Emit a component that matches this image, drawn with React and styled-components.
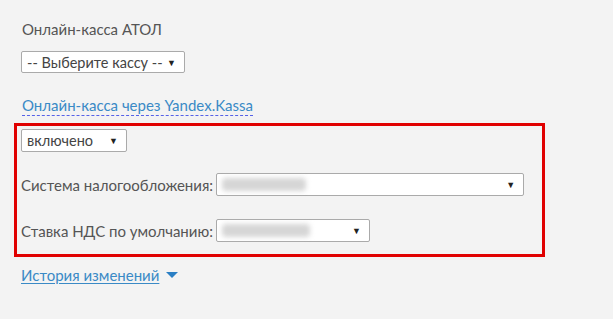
import React from "react";
import styled, { createGlobalStyle } from "styled-components";

const GlobalStyle = createGlobalStyle`
  body {
    margin: 0;
    background: #f3f3f3;
    font-family: "Lato", "Open Sans", sans-serif;
    color: #555;
  }
`;

const Page = styled.div`
  width: 613px;
  height: 319px;
  padding: 19px 0 0 0;
  box-sizing: border-box;
  display: flex;
  flex-direction: column;
`;

const Section = styled.div`
  padding-left: 21px;
  display: flex;
  flex-direction: column;
  align-items: flex-start;
`;

const Title = styled.div`
  font-size: 15px;
  line-height: 20px;
  padding-left: 1px;
`;

const Select = styled.div`
  display: flex;
  align-items: center;
  justify-content: space-between;
  box-sizing: border-box;
  width: ${(p) => p.$w}px;
  height: ${(p) => p.$h || 23}px;
  margin-top: ${(p) => p.$mt || 0}px;
  padding: 0 8px 0 5px;
  background: #fff;
  border: 1px solid #aaa;
  border-radius: 2px;
  font-size: 14.5px;
  color: #444;
`;

const Arrow = styled.span`
  font-size: 9px;
  color: #222;
`;

const Blur = styled.span`
  display: inline-block;
  width: ${(p) => p.$w}px;
  height: 13px;
  border-radius: 4px;
  background: #d6d6d6;
  filter: blur(2.5px);
`;

const DashedLink = styled.a`
  margin-top: 22px;
  margin-left: 1px;
  font-size: 15px;
  line-height: 20px;
  color: #3a8ac6;
  text-decoration: none;
  border-bottom: 1px dashed #5561e8;
`;

const Highlight = styled.div`
  margin: 7px 0 0 14px;
  width: 531px;
  box-sizing: border-box;
  border: 3px solid #e00000;
  padding: 3px 0 12px 4px;
  display: flex;
  flex-direction: column;
  align-items: flex-start;
`;

const Row = styled.div`
  display: flex;
  align-items: center;
  margin-top: ${(p) => p.$mt}px;
`;

const Label = styled.span`
  font-size: 15px;
  margin-right: 3px;
`;

const History = styled.div`
  margin: 9px 0 0 21px;
  display: flex;
  align-items: center;
  gap: 7px;
`;

const HistoryLink = styled.a`
  font-size: 15px;
  color: #3a8ac6;
  text-decoration: underline;
  text-underline-offset: 2px;
`;

const Caret = styled.span`
  width: 0;
  height: 0;
  border-left: 6px solid transparent;
  border-right: 6px solid transparent;
  border-top: 6px solid #2a7fc4;
`;

export default function App() {
  return (
    <>
      <GlobalStyle />
      <Page>
        <Section>
          <Title>Онлайн-касса АТОЛ</Title>
          <Select $w={164} $h={22} $mt={12}>
            <span>-- Выберите кассу --</span>
            <Arrow>▼</Arrow>
          </Select>
          <DashedLink>Онлайн-касса через Yandex.Kassa</DashedLink>
        </Section>
        <Highlight>
          <Select $w={106} $h={23}>
            <span>включено</span>
            <Arrow>▼</Arrow>
          </Select>
          <Row $mt={21}>
            <Label>Система налогообложения:</Label>
            <Select $w={308}>
              <Blur $w={84} />
              <Arrow>▼</Arrow>
            </Select>
          </Row>
          <Row $mt={23}>
            <Label>Ставка НДС по умолчанию:</Label>
            <Select $w={154}>
              <Blur $w={88} />
              <Arrow>▼</Arrow>
            </Select>
          </Row>
        </Highlight>
        <History>
          <HistoryLink>История изменений </HistoryLink>
          <Caret />
        </History>
      </Page>
    </>
  );
}
